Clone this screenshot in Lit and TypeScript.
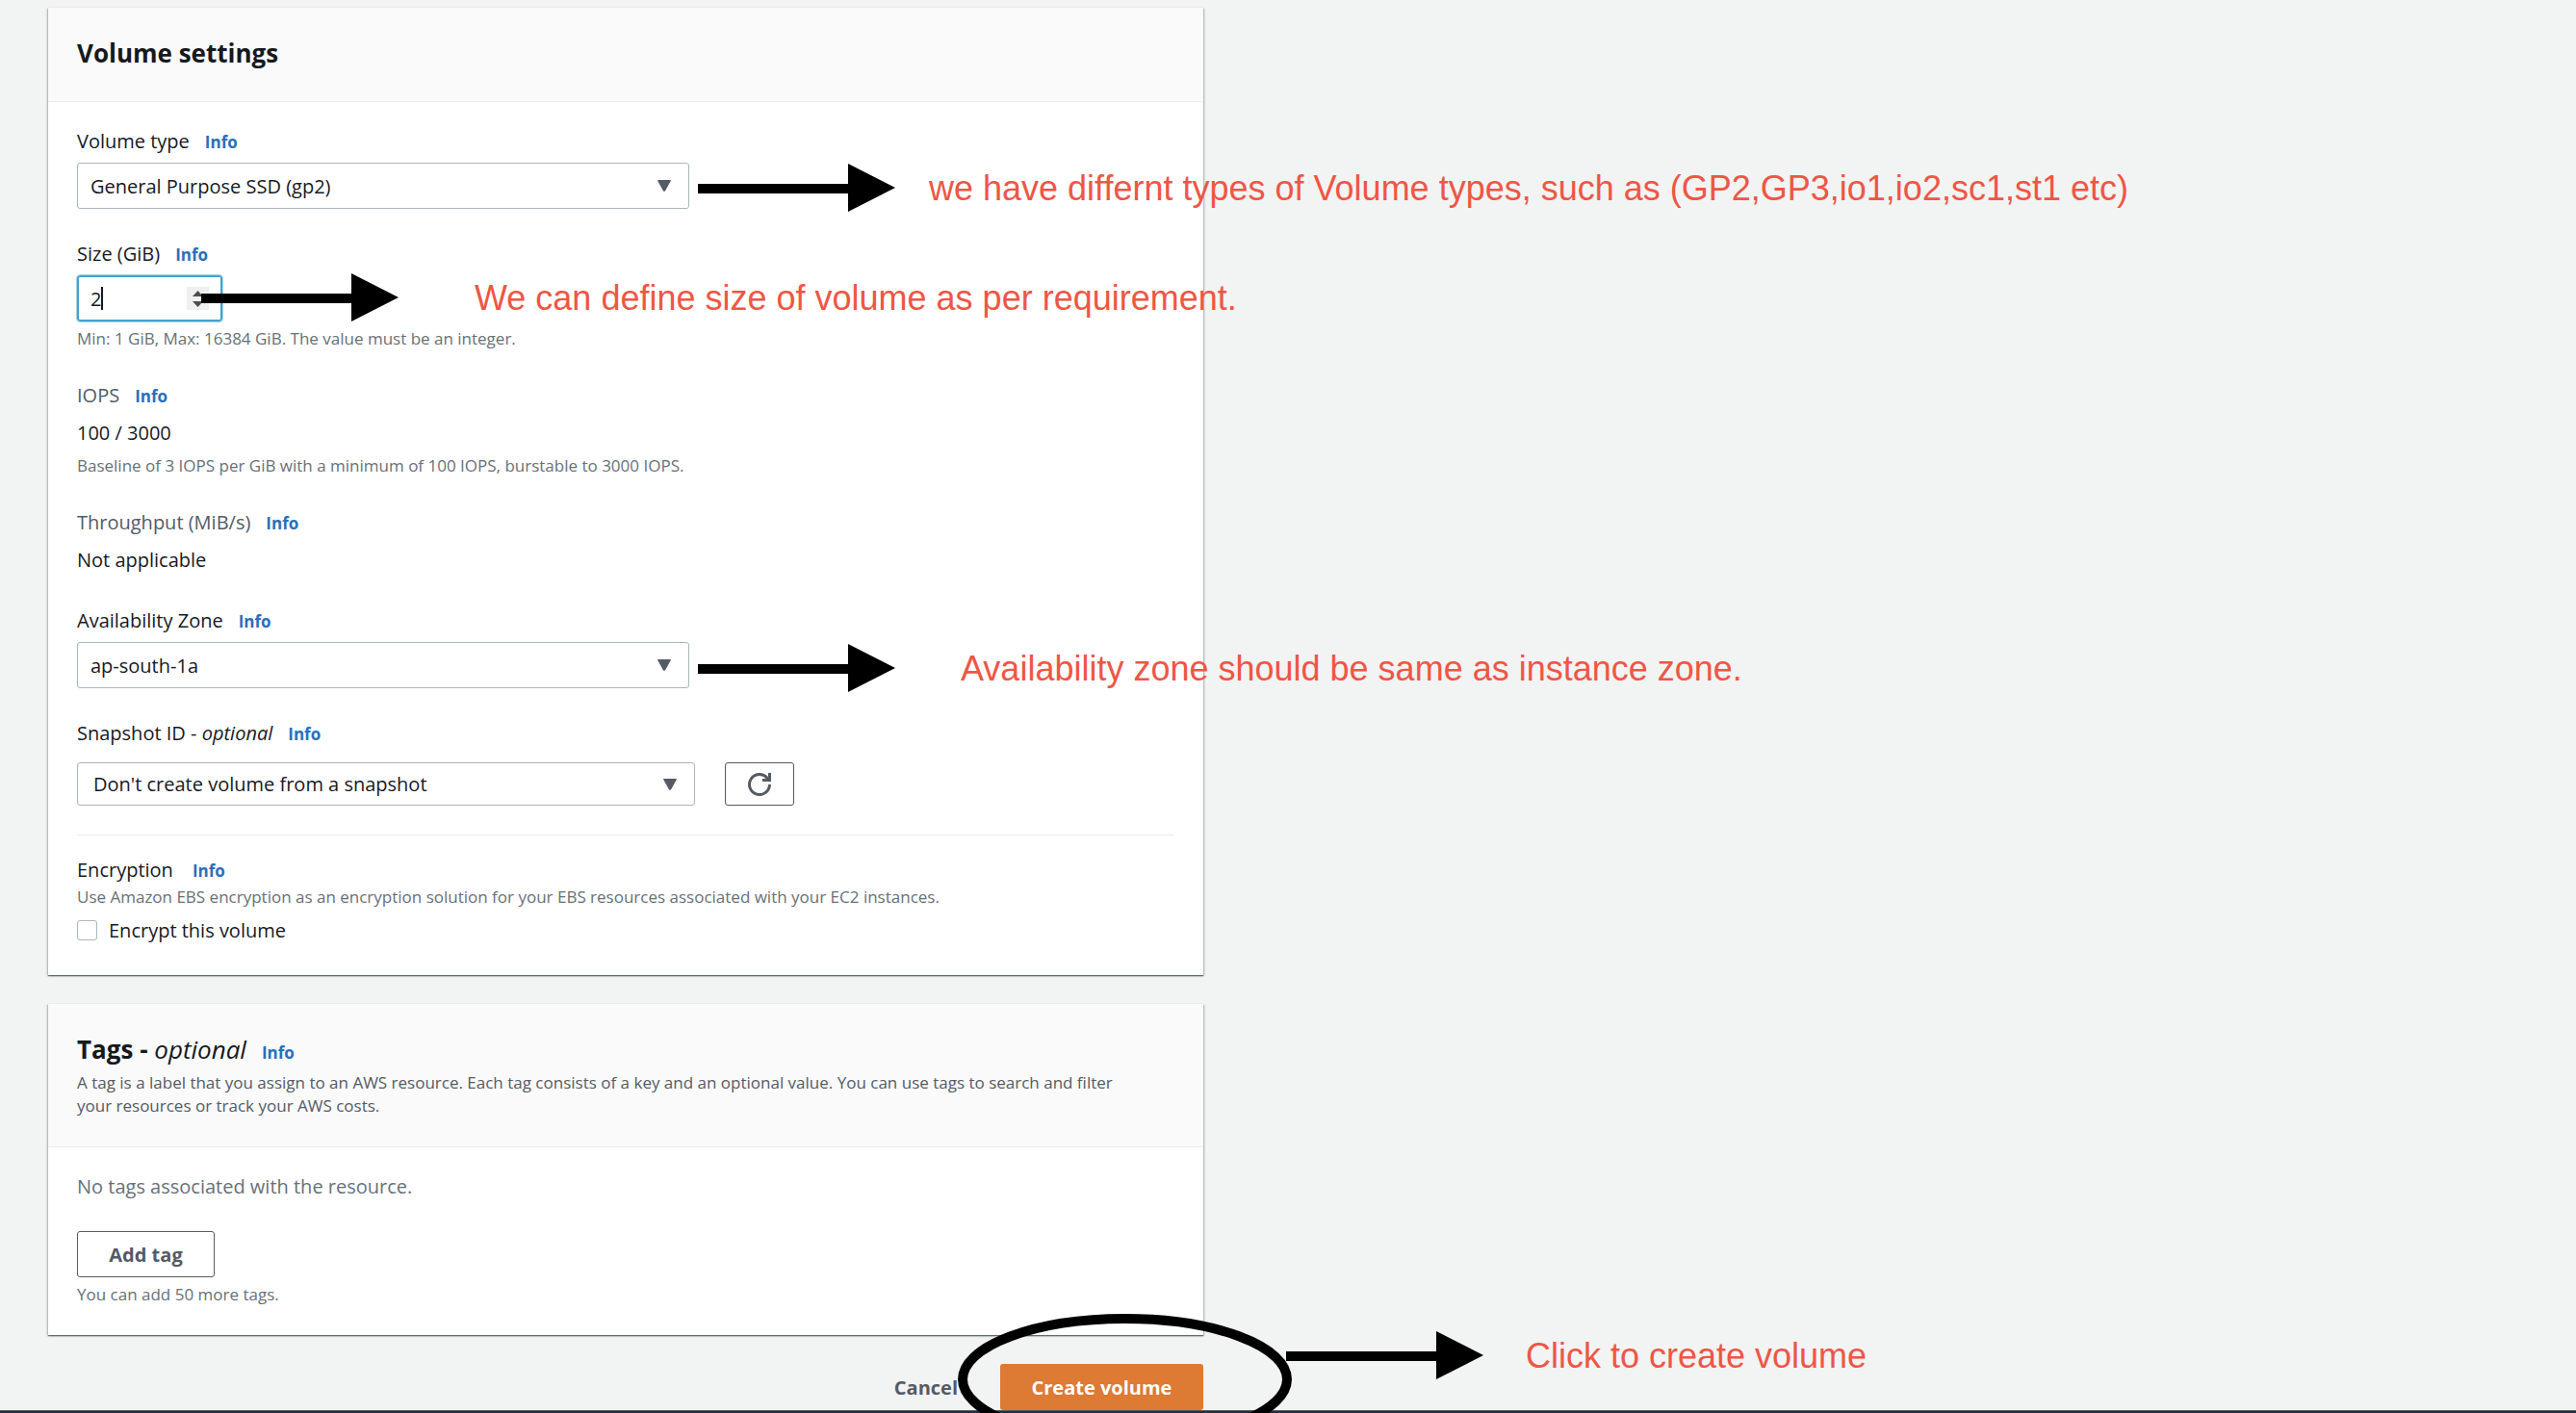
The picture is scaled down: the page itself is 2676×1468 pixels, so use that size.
import { LitElement, html, css } from "lit";
import { customElement, property, state } from "lit/decorators.js";

const caret = html`<svg class="caret" viewBox="0 0 16 12" width="16" height="12" aria-hidden="true">
  <path d="M1.5 0.5H14.5L8.6 11.2Q8 12 7.4 11.2Z" fill="#545b64" stroke="#545b64" stroke-linejoin="round" />
</svg>`;

@customElement("callout-arrow")
class CalloutArrow extends LitElement {
  static styles = css`
    :host { display: block; }
    .arrow { display: block; }
  `;
  render() {
    return html`<svg class="arrow" width="205" height="50" viewBox="0 0 205 50" aria-hidden="true">
      <path d="M0 21H156V0L205 25L156 50V31H0Z" fill="#000" />
    </svg>`;
  }
}

@customElement("info-card")
class InfoCard extends LitElement {
  static styles = css`
    :host { display: block; }
    .card {
      background: #fff;
      box-shadow: 0 1px 1px 0 rgba(0, 28, 36, 0.45), 1px 1px 2px 0 rgba(0, 28, 36, 0.25),
        -1px 1px 2px 0 rgba(0, 28, 36, 0.25);
    }
    .head {
      background: #fafafa;
      border-bottom: 1px solid #eaeded;
      padding: 31px 30px 33px;
    }
    .head.described { padding-bottom: 30px; }
    .body { padding: 24px 30px 30px; }
  `;
  @property({ type: Boolean }) described = false;
  render() {
    return html`<section class="card">
      <header class="head ${this.described ? "described" : ""}"><slot name="head"></slot></header>
      <div class="body"><slot></slot></div>
    </section>`;
  }
}

@customElement("app-root")
class AppRoot extends LitElement {
  static styles = css`
    :host {
      display: block;
      font-family: "Open Sans", "Noto Sans", sans-serif;
      font-size: 20px;
      font-weight: 500;
      line-height: 33px;
      color: #16191f;
      background: #f2f3f3;
    }
    * { box-sizing: border-box; }
    .page {
      position: relative;
      display: flex;
      flex-direction: column;
      min-height: 100vh;
      overflow: hidden;
    }
    .form {
      display: flex;
      flex-direction: column;
      gap: 30px;
      flex: 1;
      max-width: 1250px;
      padding: 8px 0 0 50px;
    }
    h2 { margin: 0; font-size: 26px; line-height: 33px; font-weight: 700; }
    p { margin: 0; }
    .opt { font-style: italic; font-weight: 500; }
    .title-row, .label-row { display: flex; align-items: baseline; gap: 16px; height: 33px; }
    .label-row.wide { gap: 20px; }
    .info { color: #2a6fba; font-size: 17px; line-height: 24px; font-weight: 700; text-decoration: none; }
    .fields { display: flex; flex-direction: column; gap: 30px; }
    .field { display: flex; flex-direction: column; gap: 6px; align-items: flex-start; }
    .field.snap { gap: 14px; }
    .muted { color: #545b64; }
    .faint { color: #687078; }
    .hint { font-size: 17px; line-height: 24px; color: #687078; }
    .desc { font-size: 17px; line-height: 24px; color: #545b64; margin-top: 6px; padding-right: 30px; }
    .select { position: relative; width: 636px; height: 48px; }
    .select.snapshot { width: 642px; height: 45px; }
    select {
      appearance: none;
      width: 100%;
      height: 100%;
      margin: 0;
      padding: 0 48px 0 13px;
      border: 1px solid #aab7b8;
      border-radius: 3px;
      background: #fff;
      color: inherit;
      font: inherit;
    }
    .snapshot select { padding-left: 16px; }
    .caret { position: absolute; right: 18px; top: 50%; transform: translateY(-50%); pointer-events: none; }
    .size { position: relative; width: 151px; height: 48px; }
    .size input {
      appearance: textfield;
      width: 100%;
      height: 100%;
      margin: 0;
      padding: 0 12px;
      border: 2px solid #45a1cd;
      border-radius: 3px;
      outline: 1px solid #a9d5e9;
      background: #fff;
      color: inherit;
      font: inherit;
    }
    .size input::-webkit-inner-spin-button { appearance: none; }
    .cursor { position: absolute; left: 25px; top: 12px; width: 2px; height: 24px; background: #16191f; }
    .spin { position: absolute; right: 14px; top: 12px; }
    .snap-row { display: flex; gap: 31px; }
    button { font: inherit; font-weight: 700; border-radius: 3px; cursor: pointer; margin: 0; }
    .plain { background: #fff; border: 1px solid #545b64; color: #545b64; height: 48px; }
    .add { width: 143px; padding: 0; }
    .refresh { width: 72px; height: 45px; padding: 0; display: flex; align-items: center; justify-content: center; }
    .divider { height: 1px; border: 0; margin: 30px 0 19px; background: #eaeded; }
    .check { display: flex; align-items: center; gap: 12px; margin-top: 6px; }
    .check input {
      appearance: none;
      width: 21px;
      height: 21px;
      margin: 0;
      border: 1px solid #aab7b8;
      border-radius: 3px;
      background: #fff;
    }
    .actions { display: flex; justify-content: flex-end; gap: 8px; }
    .cancel { border: 0; background: none; color: #545b64; height: 48px; padding: 0 36px; }
    .primary { border: 0; background: #dd7a33; color: #fff; height: 48px; width: 211px; padding: 0; }
    .bar { height: 3px; background: #232f3e; border-top: 1px solid #545b64; }
    .notes { position: absolute; inset: 0; overflow: hidden; pointer-events: none; }
    .note {
      position: absolute;
      font-family: "Liberation Sans", Arial, sans-serif;
      font-size: 36px;
      font-weight: 400;
      line-height: 42px;
      color: #ee5645;
      white-space: nowrap;
    }
    .arrow { position: absolute; }
    .ring { position: absolute; left: 995px; top: 1365px; }
    .a-type { left: 725px; top: 170px; }
    .a-size { left: 209px; top: 284px; }
    .a-zone { left: 725px; top: 669px; }
    .a-create { left: 1336px; top: 1383px; }
    .n-type { left: 965px; top: 175px; }
    .n-size { left: 493px; top: 289px; }
    .n-zone { left: 998px; top: 674px; }
    .n-create { left: 1585px; top: 1388px; }
  `;

  @state() private size = 2;

  private info() {
    return html`<a class="info" href="#info">Info</a>`;
  }

  render() {
    return html`<div class="page">
      <main class="form">
        <info-card>
          <h2 slot="head">Volume settings</h2>
          <div class="fields">
            <div class="field">
              <div class="label-row"><label for="type">Volume type</label>${this.info()}</div>
              <div class="select">
                <select id="type"><option>General Purpose SSD (gp2)</option></select>${caret}
              </div>
            </div>
            <div class="field">
              <div class="label-row"><label for="size">Size (GiB)</label>${this.info()}</div>
              <div class="size">
                <input id="size" type="number" min="1" max="16384" .value=${String(this.size)} />
                <span class="cursor"></span>
                <svg class="spin" width="23" height="24" viewBox="0 0 23 24" aria-hidden="true">
                  <rect width="23" height="24" fill="#efefef" />
                  <path d="M6 10L11.5 4L17 10ZM6 15L11.5 21L17 15Z" fill="#4d4d4d" />
                </svg>
              </div>
              <p class="hint">Min: 1 GiB, Max: 16384 GiB. The value must be an integer.</p>
            </div>
            <div class="field">
              <div class="label-row"><span class="muted">IOPS</span>${this.info()}</div>
              <p>100 / 3000</p>
              <p class="hint">Baseline of 3 IOPS per GiB with a minimum of 100 IOPS, burstable to 3000 IOPS.</p>
            </div>
            <div class="field">
              <div class="label-row"><span class="muted">Throughput (MiB/s)</span>${this.info()}</div>
              <p>Not applicable</p>
            </div>
            <div class="field">
              <div class="label-row"><label for="zone">Availability Zone</label>${this.info()}</div>
              <div class="select">
                <select id="zone"><option>ap-south-1a</option></select>${caret}
              </div>
            </div>
            <div class="field snap">
              <div class="label-row">
                <label for="snapshot">Snapshot ID - <span class="opt">optional</span></label>${this.info()}
              </div>
              <div class="snap-row">
                <div class="select snapshot">
                  <select id="snapshot"><option>Don't create volume from a snapshot</option></select>${caret}
                </div>
                <button class="plain refresh" aria-label="Refresh snapshots">
                  <svg width="24" height="24" viewBox="0 0 24 24" fill="none" stroke="#545b64" stroke-width="3" aria-hidden="true">
                    <path d="M22.5 12A10.5 10.5 0 1 1 19.8 5L22 7.5M22.5 0V7.5H15" />
                  </svg>
                </button>
              </div>
            </div>
          </div>
          <hr class="divider" />
          <div class="label-row wide"><span>Encryption</span>${this.info()}</div>
          <p class="hint">Use Amazon EBS encryption as an encryption solution for your EBS resources associated with your EC2 instances.</p>
          <label class="check"><input type="checkbox" />Encrypt this volume</label>
        </info-card>

        <info-card described>
          <div slot="head">
            <div class="title-row"><h2>Tags - <span class="opt">optional</span></h2>${this.info()}</div>
            <p class="desc">A tag is a label that you assign to an AWS resource. Each tag consists of a key and an optional value. You can use tags to search and filter your resources or track your AWS costs.</p>
          </div>
          <div class="fields">
            <p class="faint">No tags associated with the resource.</p>
            <div class="field">
              <button class="plain add">Add tag</button>
              <p class="hint">You can add 50 more tags.</p>
            </div>
          </div>
        </info-card>

        <div class="actions">
          <button class="cancel">Cancel</button>
          <button class="primary">Create volume</button>
        </div>
      </main>
      <footer class="bar"></footer>

      <div class="notes">
        <callout-arrow class="arrow a-type"></callout-arrow>
        <span class="note n-type">we have differnt types of Volume types, such as (GP2,GP3,io1,io2,sc1,st1 etc)</span>
        <callout-arrow class="arrow a-size"></callout-arrow>
        <span class="note n-size">We can define size of volume as per requirement.</span>
        <callout-arrow class="arrow a-zone"></callout-arrow>
        <span class="note n-zone">Availability zone should be same as instance zone.</span>
        <svg class="ring" width="347" height="136" viewBox="0 0 347 136" aria-hidden="true">
          <ellipse cx="173.5" cy="68" rx="168.5" ry="63" fill="none" stroke="#000" stroke-width="10" />
        </svg>
        <callout-arrow class="arrow a-create"></callout-arrow>
        <span class="note n-create">Click to create volume</span>
      </div>
    </div>`;
  }
}
